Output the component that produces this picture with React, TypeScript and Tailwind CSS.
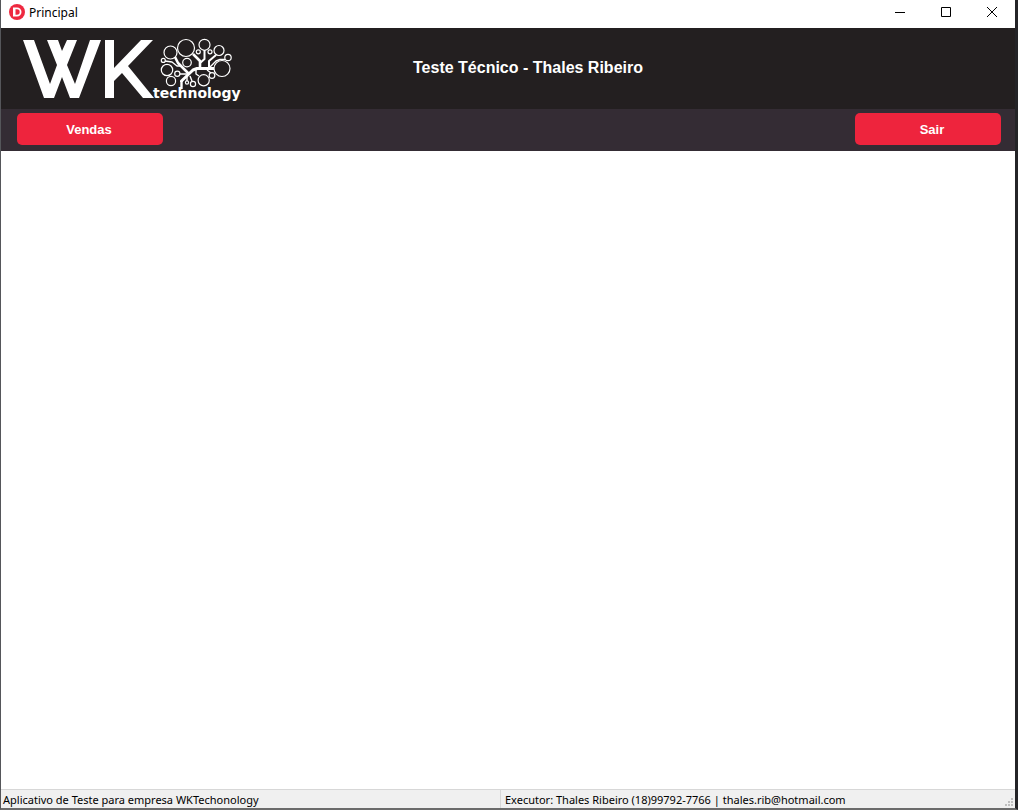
import React from "react";

const circles: [number, number, number][] = [
  [170.5, 52.5, 6.5], [186, 48, 8.5], [204.5, 44.8, 5.5], [219, 50.5, 5], [228, 57.5, 3.2],
  [222, 68.5, 8], [212, 75.5, 2.8], [203.7, 80.3, 5.6], [193, 84, 2.6], [187, 82.5, 1.6],
  [177.3, 73.8, 2.6], [171, 81, 4.6], [167, 70, 5.7], [163.3, 60.4, 2], [187, 62.6, 4.3],
  [198.3, 51.8, 2], [210, 51.8, 2],
];

function Logo() {
  return (
    <svg viewBox="22 34 222 69" className="h-[69px] w-[222px] shrink-0" role="img" aria-label="WK technology">
      <path fill="#fff" d="M23 40H34L50 84L57 65L47 40H58L62 51L67 40H77L67 65L75 84L90 40H101L79 98H70L62 77L54 98H44Z" />
      <path fill="#fff" d="M105 40H114V68L141 40H153L128 66L154 98H143L122 73L114 81V98H105Z" />
      <g fill="none" stroke="#fff" strokeWidth="1.2">
        {circles.map(([cx, cy, r]) => <circle key={`${cx}-${cy}`} cx={cx} cy={cy} r={r} />)}
      </g>
      <g fill="none" stroke="#fff" strokeLinejoin="round">
        <path strokeWidth="2.4" d="M181.5 89V81" />
        <path strokeWidth="3" d="M181.5 82V81L193 70L197 68.5H214" />
        <path strokeWidth="2.6" d="M189 74L178 63L175 57M200 68V61L193 54" />
        <path strokeWidth="2" d="M200 63L204.5 59V50M209 68V61L216 55" />
        <path strokeWidth="1.4" d="M210 67L216 61L220 59.5H225M165 61L172 62L177 66L181 66M180 74H187M187 81V77M190 76L192 81M196 70V74L199 76M207 70L211 73" />
      </g>
      <text x="153" y="98" fill="#fff" fontFamily="DejaVu Sans, Verdana, sans-serif" fontWeight="700" fontSize="14">technology</text>
    </svg>
  );
}

export default function App() {
  return (
    <div className="flex h-screen flex-col border-b-2 border-l border-r-[3px] border-b-[#6b6b6b] border-l-[#55565a] border-r-[#242427] bg-white font-['Noto_Sans',sans-serif] text-black">
      <div className="flex h-7 shrink-0 items-center justify-between pb-1 pl-2">
        <div className="flex items-center gap-1 text-[12px]">
          <svg viewBox="0 0 16 16" className="size-4" aria-hidden="true">
            <circle cx="8" cy="8" r="8" fill="#ee2940" />
            <path fillRule="evenodd" fill="#fff" d="M4 3.5H8a4.5 4.5 0 0 1 0 9H4ZM6.5 5.3V10.7H8a2.7 2.7 0 0 0 0-5.4Z" />
          </svg>
          <span className="pt-px">Principal</span>
        </div>
        <div className="flex">
          <button aria-label="Minimizar" className="flex h-6 w-[46px] items-center justify-center">
            <svg viewBox="0 0 10 10" className="size-[10px]" stroke="#000" fill="none"><path d="M0 5.5H10" /></svg>
          </button>
          <button aria-label="Maximizar" className="flex h-6 w-[46px] items-center justify-center">
            <svg viewBox="0 0 10 10" className="size-[10px]" stroke="#000" fill="none"><path d="M.5.5H9.5V9.5H.5Z" /></svg>
          </button>
          <button aria-label="Fechar" className="flex h-6 w-[46px] items-center justify-center">
            <svg viewBox="0 0 10 10" className="size-[10px]" stroke="#000" fill="none"><path d="M0 0L10 10M10 0L0 10" /></svg>
          </button>
        </div>
      </div>
      <header className="grid h-[81px] shrink-0 grid-cols-[222px_1fr_203px] items-center bg-[#231f20] pl-[21px]">
        <Logo />
        <h1 className="pb-[2px] text-center font-['Liberation_Sans',sans-serif] text-[16px] font-bold text-white">Teste Técnico - Thales Ribeiro</h1>
      </header>
      <nav className="flex h-[42px] shrink-0 items-start justify-between bg-[#342c34] pt-1 pr-[14px] pl-4 font-['Liberation_Sans',sans-serif] text-[13px] font-bold text-white">
        <button className="h-8 w-[146px] rounded-[5px] bg-[#ee243d] pt-px pr-[2px]">Vendas</button>
        <button className="h-8 w-[146px] rounded-[5px] bg-[#ee243d] pt-px pl-2">Sair</button>
      </nav>
      <main className="flex-1" />
      <footer className="flex h-[19px] shrink-0 items-center border-t border-[#d7d7d7] bg-[#f0f0f0] text-[11px]">
        <div className="w-[499px] pt-[2px] pl-[2px]">Aplicativo de Teste para empresa WKTechonology</div>
        <div className="flex-1 border-l border-[#d7d7d7] pt-[2px] pl-1">Executor: Thales Ribeiro (18)99792-7766 | thales.rib@hotmail.com</div>
        <svg viewBox="0 0 8 8" className="mr-[2px] mb-[2px] size-2 self-end" fill="#bfbfbf" aria-hidden="true">
          <path d="M6 0h2v2H6zM3 3h2v2H3zM6 3h2v2H6zM0 6h2v2H0zM3 6h2v2H3zM6 6h2v2H6z" />
        </svg>
      </footer>
    </div>
  );
}
